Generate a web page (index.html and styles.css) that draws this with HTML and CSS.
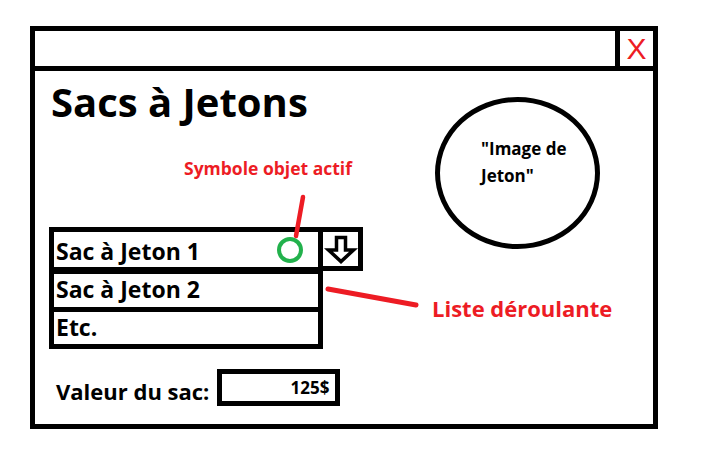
FILE: index.html
```html
<!DOCTYPE html>
<html lang="fr">
<head>
<meta charset="utf-8">
<title>Sacs à Jetons</title>
<link rel="stylesheet" href="styles.css">
</head>
<body>
<div class="window">
  <div class="titlebar">
    <div class="titlebar-space"></div>
    <div class="close">X</div>
  </div>
  <div class="content">
    <div class="left">
      <h1 class="title">Sacs à Jetons</h1>
      <div class="note note-symbol">Symbole objet actif</div>
      <div class="dropdown">
        <div class="list">
          <div class="row row-first">
            <span class="row-text">Sac à Jeton 1</span>
            <span class="active-dot"></span>
          </div>
          <div class="row row-second"><span class="row-text">Sac à Jeton 2</span></div>
          <div class="row row-last"><span class="row-text">Etc.</span></div>
        </div>
        <div class="drop-btn">
          <svg width="35" height="34" viewBox="0 0 35 34">
            <polygon points="13.5,5.5 22.5,5.5 22.5,18 30.5,18 18,29.5 5.5,18 13.5,18" fill="#fff" stroke="#000" stroke-width="3.5" stroke-linejoin="miter"/>
          </svg>
        </div>
        <div class="note note-list">Liste déroulante</div>
      </div>
      <div class="value-row">
        <span class="value-label">Valeur du sac:</span>
        <div class="value-box">125$</div>
      </div>
    </div>
    <div class="right">
      <div class="token-image">
        <div class="token-text">"Image de<br>Jeton"</div>
      </div>
    </div>
  </div>
</div>
<svg class="annotations" width="707" height="465" viewBox="0 0 707 465">
  <line x1="303" y1="197" x2="296" y2="236" stroke="#ed1c24" stroke-width="4.5" stroke-linecap="round"/>
  <line x1="328" y1="289" x2="416" y2="305" stroke="#ed1c24" stroke-width="5" stroke-linecap="round"/>
</svg>
</body>
</html>
```

FILE: styles.css
```css
html, body {
  margin: 0;
  padding: 0;
  background: #fff;
}

body {
  position: relative;
  width: 707px;
  height: 465px;
  overflow: hidden;
  font-family: "Open Sans", "Liberation Sans", sans-serif;
  color: #000;
}

.window {
  box-sizing: border-box;
  margin: 26px 0 0 30px;
  width: 628px;
  height: 403px;
  border: 5px solid #000;
  display: flex;
  flex-direction: column;
}

.titlebar {
  display: flex;
  height: 40px;
  border-bottom: 5px solid #000;
  box-sizing: border-box;
}

.titlebar-space {
  flex: 1;
}

.close {
  box-sizing: border-box;
  width: 38px;
  border-left: 5px solid #000;
  font-family: "Liberation Sans", Arial, sans-serif;
  font-size: 30px;
  line-height: 35px;
  text-align: center;
  color: #ed1c24;
}

.content {
  display: flex;
  flex: 1;
}

.left {
  width: 400px;
  flex-shrink: 0;
  padding-left: 14px;
  padding-top: 6px;
  box-sizing: border-box;
}

.title {
  margin: 0;
  font-size: 40px;
  font-weight: 700;
  line-height: 50px;
  padding-left: 2px;
}

.note {
  color: #ed1c24;
  font-weight: 700;
  white-space: nowrap;
}

.note-symbol {
  margin-top: 31px;
  padding-left: 135px;
  font-size: 17.5px;
  line-height: 20px;
}

.dropdown {
  margin-top: 49px;
  display: flex;
  align-items: flex-start;
}

.list {
  flex-shrink: 0;
  width: 274px;
  box-sizing: border-box;
  border: 5px solid #000;
  border-bottom: none;
}

.row {
  display: flex;
  align-items: flex-start;
  border-bottom: 5px solid #000;
  font-size: 23px;
  font-weight: 700;
  line-height: 31px;
  padding-left: 2px;
}

.row-first {
  height: 31px;
  border-bottom-width: 7px;
  padding-top: 4px;
}

.row-second {
  height: 33px;
}

.row-last {
  height: 32px;
}

.row-text {
  white-space: nowrap;
}

.active-dot {
  box-sizing: border-box;
  flex-shrink: 0;
  width: 26px;
  height: 26px;
  border: 4px solid #22b14c;
  border-radius: 50%;
  margin-left: auto;
  margin-right: 15px;
  margin-top: 1px;
}

.drop-btn {
  flex-shrink: 0;
  box-sizing: border-box;
  width: 45px;
  height: 44px;
  margin-left: -5px;
  border: 5px solid #000;
  display: flex;
}

.drop-btn svg {
  display: block;
}

.note-list {
  flex-shrink: 0;
  margin-left: 69px;
  margin-top: 66px;
  font-size: 22px;
  line-height: 30px;
}

.value-row {
  display: flex;
  align-items: flex-start;
  margin-top: 20px;
  padding-left: 7px;
}

.value-label {
  font-size: 22px;
  font-weight: 700;
  line-height: 30px;
  margin-top: 7px;
  white-space: nowrap;
}

.value-box {
  flex-shrink: 0;
  box-sizing: border-box;
  width: 123px;
  height: 37px;
  margin-left: 8px;
  border: 5px solid #000;
  text-align: right;
  padding-right: 6px;
  font-size: 17px;
  font-weight: 700;
  line-height: 27px;
}

.right {
  flex: 1;
  display: flex;
  justify-content: flex-end;
  padding-right: 53px;
}

.token-image {
  box-sizing: border-box;
  width: 165px;
  height: 152px;
  margin-top: 26px;
  border: 5px solid #000;
  border-radius: 50%;
  padding: 33px 0 0 41px;
}

.token-text {
  font-size: 17px;
  font-weight: 700;
  line-height: 27px;
  white-space: nowrap;
}

.annotations {
  position: absolute;
  left: 0;
  top: 0;
  pointer-events: none;
}
```
